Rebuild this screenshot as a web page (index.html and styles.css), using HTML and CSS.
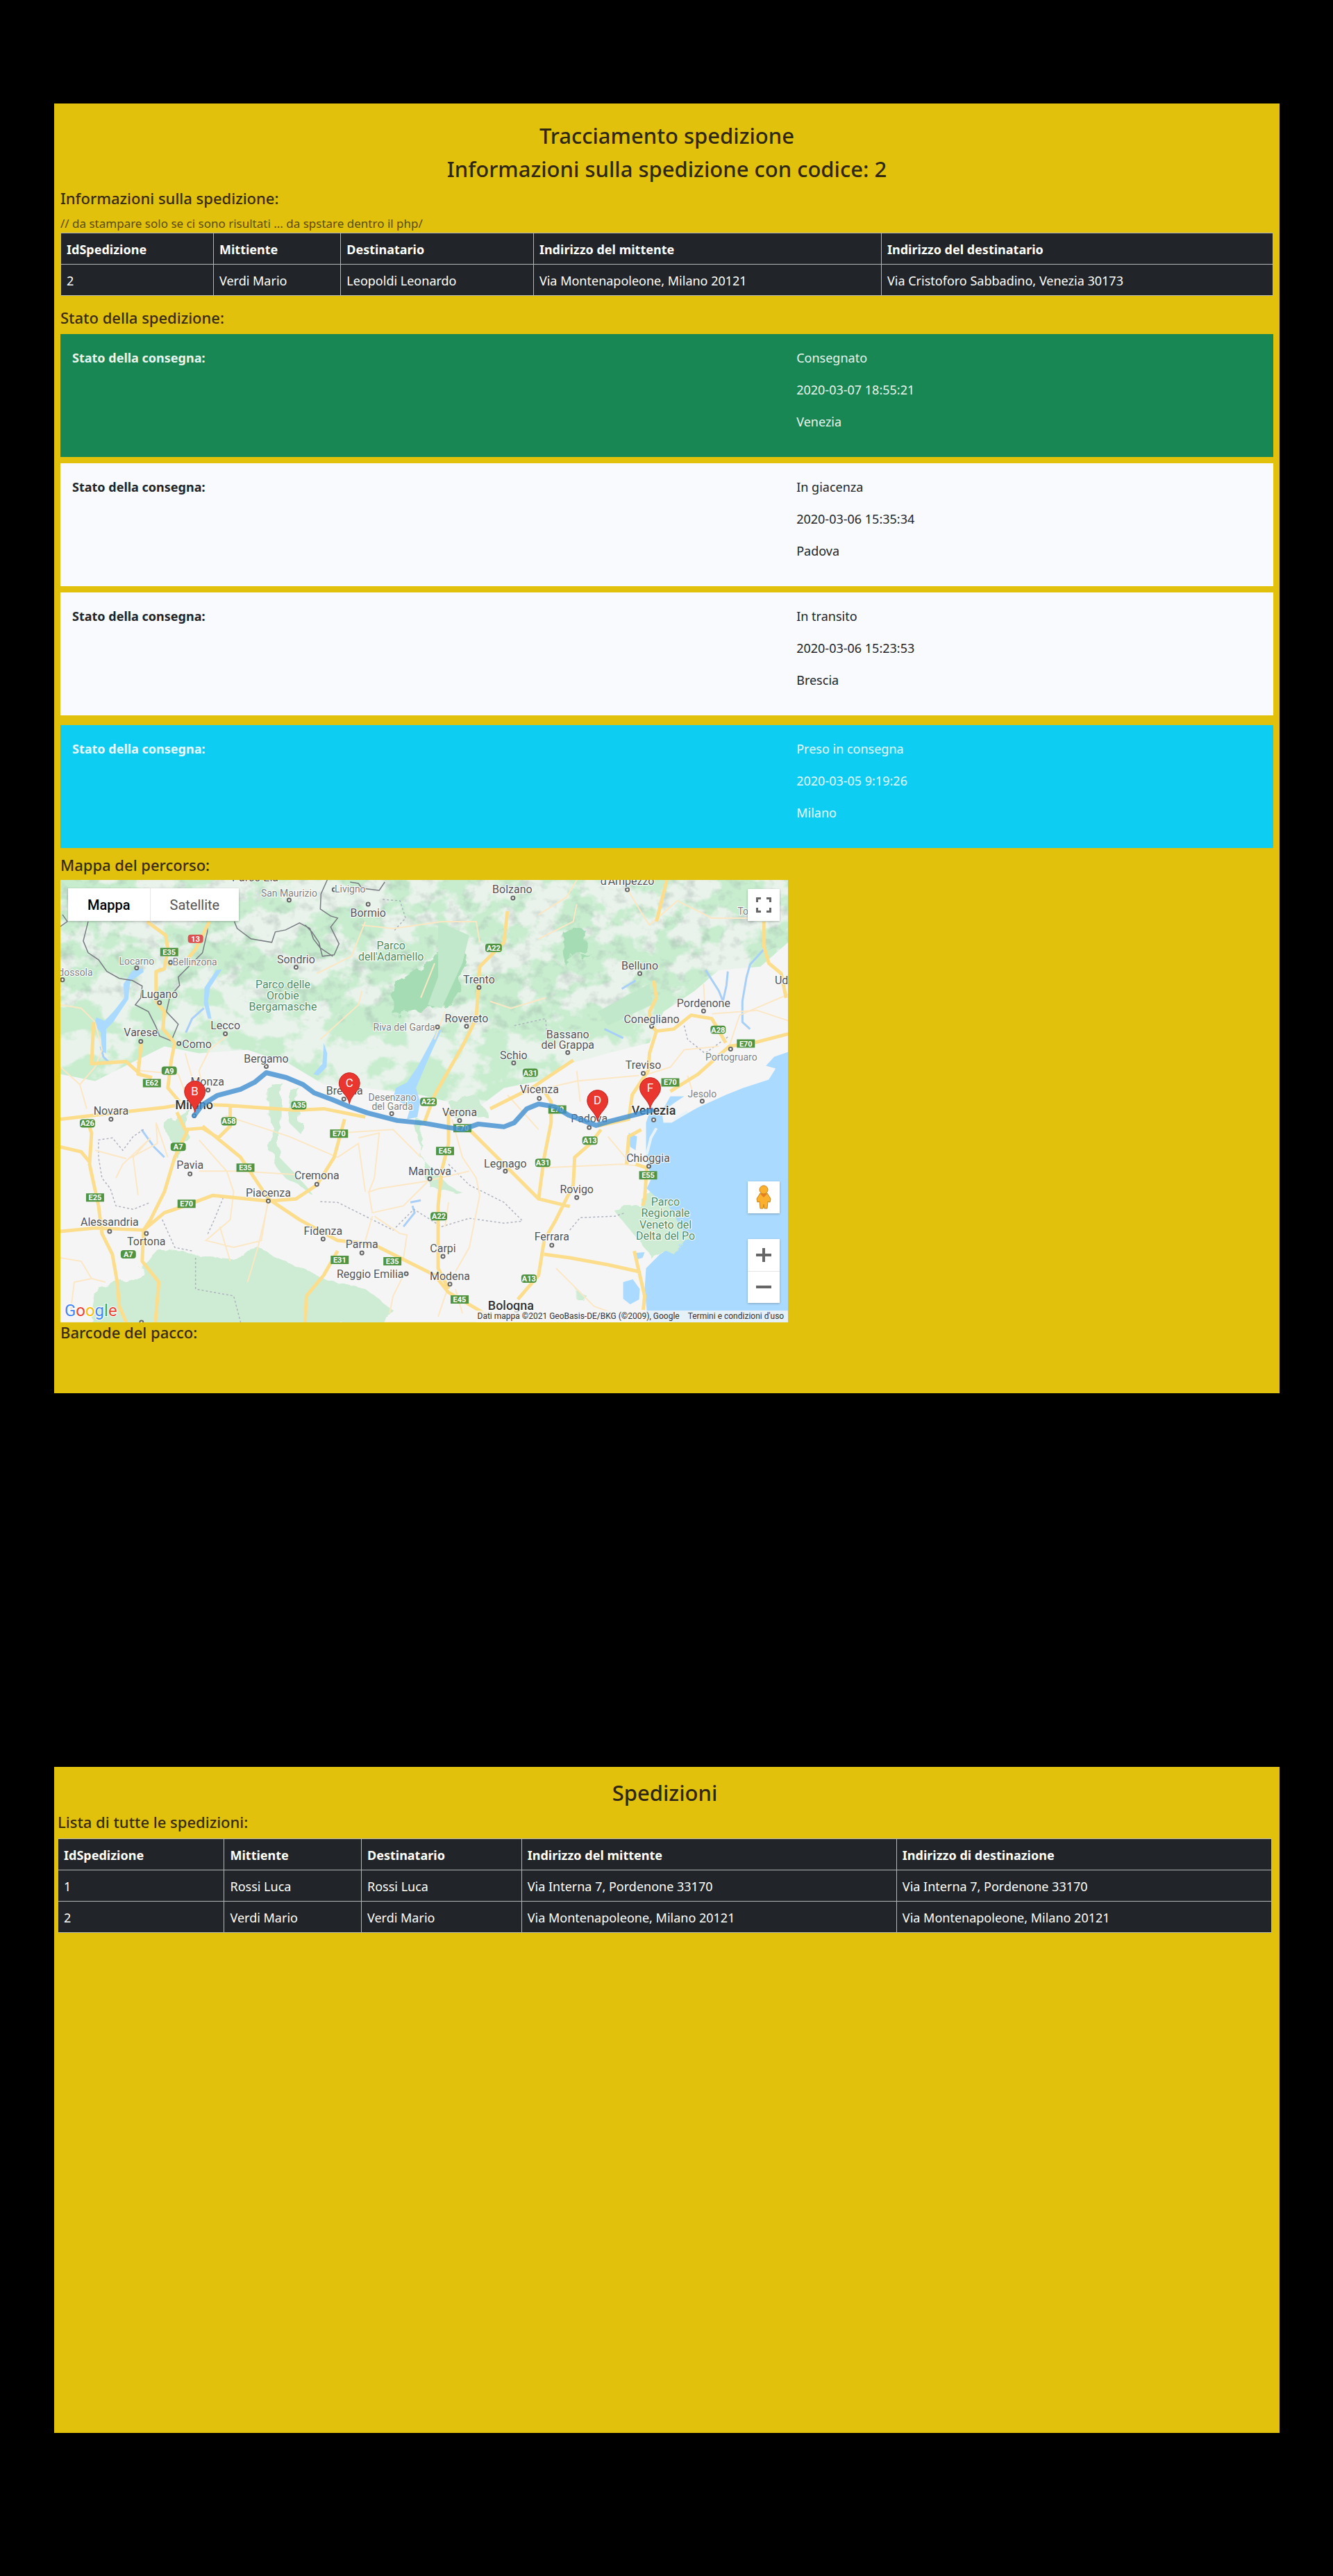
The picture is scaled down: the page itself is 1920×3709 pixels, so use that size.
FILE: index.html
```html
<!DOCTYPE html>
<html lang="it">
<head>
<meta charset="utf-8">
<meta name="viewport" content="width=device-width, initial-scale=1">
<title>Tracciamento spedizione</title>
<link rel="stylesheet" href="styles.css">
</head>
<body>
<main class="pages">
<section class="panel">
  <h1 class="title">Tracciamento spedizione</h1>
  <h2 class="title">Informazioni sulla spedizione con codice: 2</h2>
  <h3 class="subtitle">Informazioni sulla spedizione:</h3>
  <p class="note">// da stampare solo se ci sono risultati ... da spstare dentro il php/</p>
  <table class="data">
    <colgroup><col class="t-id"><col class="t-from"><col class="t-to"><col class="t-src"><col></colgroup>
    <thead><tr><th>IdSpedizione</th><th>Mittiente</th><th>Destinatario</th><th>Indirizzo del mittente</th><th>Indirizzo del destinatario</th></tr></thead>
    <tbody><tr><td>2</td><td>Verdi Mario</td><td>Leopoldi Leonardo</td><td>Via Montenapoleone, Milano 20121</td><td>Via Cristoforo Sabbadino, Venezia 30173</td></tr></tbody>
  </table>
  <h3 class="subtitle subtitle-spaced">Stato della spedizione:</h3>
  <div class="states">
    <article class="state state-done"><strong>Stato della consegna:</strong><div class="values"><span>Consegnato</span><span>2020-03-07 18:55:21</span><span>Venezia</span></div></article>
    <article class="state"><strong>Stato della consegna:</strong><div class="values"><span>In giacenza</span><span>2020-03-06 15:35:34</span><span>Padova</span></div></article>
    <article class="state"><strong>Stato della consegna:</strong><div class="values"><span>In transito</span><span>2020-03-06 15:23:53</span><span>Brescia</span></div></article>
    <article class="state state-start"><strong>Stato della consegna:</strong><div class="values"><span>Preso in consegna</span><span>2020-03-05 9:19:26</span><span>Milano</span></div></article>
  </div>
  <h3 class="subtitle subtitle-map">Mappa del percorso:</h3>
  <div class="map">
    <svg class="map-canvas" viewBox="0 0 1050 638" role="img" aria-label="Percorso Milano - Venezia">
      <defs>
        <filter id="relief" x="0" y="0" width="100%" height="100%" color-interpolation-filters="sRGB">
          <feTurbulence type="fractalNoise" baseFrequency=".018 .022" numOctaves="5" seed="8"/>
          <feColorMatrix values="0 0 0 0 .76  0 0 0 0 .92  0 0 0 0 .79  9 0 0 0 -3.9" result="n"/>
          <feComposite in="n" in2="SourceAlpha" operator="in"/>
        </filter>
        <filter id="ridge" x="0" y="0" width="100%" height="100%" color-interpolation-filters="sRGB">
          <feTurbulence type="fractalNoise" baseFrequency=".05 .06" numOctaves="4" seed="3"/>
          <feColorMatrix values="0 0 0 0 .55  0 0 0 0 .6  0 0 0 0 .6  3 0 0 0 -1.55" result="n"/>
          <feComposite in="n" in2="SourceAlpha" operator="in"/>
        </filter>
        <filter id="rough"><feTurbulence type="fractalNoise" baseFrequency=".04" numOctaves="3" seed="2"/><feDisplacementMap in="SourceGraphic" scale="22"/></filter>
        <g id="pin"><path d="M0 30C-2 17-15 12-15 0a15 15 0 0 1 30 0C15 12 2 17 0 30z" fill="#e9362f" stroke="#c5221f"/></g>
      </defs>
      <rect width="1050" height="638" fill="#f6f5f6"/>
      <!-- terrain -->
      <path d="M0 0H1050V90L1010 125 950 130 915 160 870 190 850 235 790 250 735 265 690 290 640 300 600 330 520 310 440 300 380 295 330 265 270 245 200 250 150 240 110 260 50 290 0 280z" fill="#d8f0dd" opacity=".4"/>
      <path d="M0 0H1050V90L1010 125 950 130 915 160 870 190 850 235 790 250 735 265 690 290 640 300 600 330 520 310 440 300 380 295 330 265 270 245 200 250 150 240 110 260 50 290 0 280z" filter="url(#relief)" opacity=".85"/>
      <path d="M0 0H1050V90L950 130 870 170 735 220 640 220 520 220 330 200 200 150 0 190z" filter="url(#ridge)" opacity=".3"/>
      <g fill="#ceecd3" filter="url(#rough)">
        <path d="M50 590 110 575 140 535 190 540 250 545 290 535 350 560 390 580 440 590 480 620 470 645H40z"/>
        <path d="M150 350 185 330 180 380 165 400zM300 290 318 290 316 400 345 430 360 450 325 430 305 405zM335 305 345 300 350 370 330 350zM510 340 525 350 520 400 560 440 585 455 530 440z"/>
        <path d="M800 478 840 465 860 440 905 500 885 530 860 540 835 520zM560 320 600 310 615 340 570 345zM745 590 760 600 750 610z"/>
      </g>
      <g fill="#a6dcb4" filter="url(#rough)"><path d="M485 150 560 100 585 85 590 130 560 175 535 185 480 195zM725 75 755 70 755 105 730 125zM755 110 765 105 755 120z"/></g>
      <path d="M545 60 590 80 580 120 550 185 530 180 545 140zM820 165 850 150 853 180 790 210 775 190z" fill="#c2e8cb"/>
      <!-- sea and lakes -->
      <g fill="#aadaff">
        <path d="M1050 248 1030 255 1018 268 1032 272 1022 288 985 300 960 310 920 328 895 342 882 350 870 350 868 335 885 322 900 312 880 312 870 330 860 335 850 335 845 350 845 392 852 432 846 445 860 458 875 465 895 500 885 528 865 540 845 560 843 590 846 620 849 638H1050z"/>
        <path d="M812 580 826 576 836 590 835 605 822 612 812 604zM830 538 843 537 840 545 833 547zM820 365 832 370 830 390 822 385z"/>
        <path d="M543 218 550 216 530 260 513 300 519 320 515 342 500 345 505 328 480 315 484 300 500 292 515 270z"/>
        <path d="M104 131 119 127 120 133 101 146 99 160 98 172 76 205 66 215 66 250 60 248 58 220 48 208 52 198 64 203 78 188 92 170 91 150zM225 130 233 129 216 155 213 175 218 200 213 200 207 178 208 155zM380 235 385 250 384 270 372 282 365 280 378 265z"/>
      </g>
      <path d="M845 490 858 462 880 480 905 515 885 540 868 532 852 545 838 520z" fill="#ceecd3" filter="url(#rough)"/>
      <path d="M846 396 852 372 860 358M885 346 905 334" fill="none" stroke="#e8f3f8" stroke-width="4"/>
      <path d="M181 220 190 200 207 185M58 240 62 255 70 263M931 130 950 160 956 175 961 152 963 132M1018 97 995 122 990 140 984 175 984 205 995 215M785 215 812 228M117 360 135 385 150 400M810 157 830 145M505 465 520 462M508 470 511 480 495 500" fill="none" stroke="#a8cff8" stroke-width="3"/>
      <!-- borders -->
      <g fill="none" stroke="#777a80" stroke-width="1.500"><path d="M40 60 33 88 40 105 55 115 67 132 85 142 104 145 118 153 116 170 108 180 127 190 138 212 143 225 160 232 170 208 153 190 158 168 172 152 170 140 190 120 205 105 212 75 213 60M251 60 255 70 275 85 305 90 310 75 325 72 345 62 360 70 365 85 375 98 393 110M385 0 376 20 375 42 390 52 400 55 390 68 402 92 395 108 378 110 373 90 363 75 353 65M418 3 430 5 435 12 460 15 468 3M0 67 10 60 3 50"/>
      <path stroke="#aeb2bd" stroke-dasharray="3 3" d="M120 360 105 370 90 390 75 372 55 375 55 400 60 430 72 445 80 470 105 475 130 465M235 458 222 490 212 512M147 490 165 530 190 535M195 545V590L250 600 260 638M375 464 400 465 440 485 480 505 510 475 550 500 590 488 640 495 667 492M560 410 590 440 640 465 667 492M735 505 750 487 800 485 815 480M655 210 700 200 702 225M900 210 905 230 930 250 965 225M465 28 490 30 498 55 480 75"/></g>
      <!-- roads -->
      <g fill="none" stroke="#fbe7c4" stroke-width="2"><path d="M0 180 30 185 50 205M50 205 60 245 50 270 28 295 0 270M28 295 38 330M110 262 115 275 170 280 185 320M215 245 200 275 205 300M240 225 215 245M180 250 190 285 210 290M238 340 330 370 400 400 430 380 440 450M80 430 90 410 130 372 105 400 112 455M98 402 140 380 138 350 155 400M50 390 95 402M200 420 260 420 340 425M200 375 240 420 250 450 245 490 210 520 250 530 290 520 299 465M300 465 285 530 270 580M0 545 30 550 45 575 65 580M45 575 20 580 15 620M402 365 480 360 520 400M430 372 460 365 453 430 445 450 460 445 525 435 590 420M445 450 450 480 495 470 530 435M450 485 440 520M453 485 490 510 500 512 495 545M565 345 580 400 600 430 605 455 590 530 570 565M560 465 555 500M495 570 480 600 475 625M645 310 690 360M700 415 810 410 830 412M790 370 815 400M745 275 750 320M693 302 745 290 835 282M841 282 880 270 900 245 950 240M905 282 915 315M930 185 928 150M965 240 980 195 1050 165M940 193 1005 188 1050 203M715 560 770 615 790 622M560 585 545 630M570 590 580 625M230 500 245 550M690 50 730 25 745 0M690 85 740 60 745 35M810 0 840 50 850 65 890 30 940 55 1000 55M620 175 650 185 700 170M435 65 480 70 550 60 600 60 605 90M370 135 420 110 440 60M375 230 430 180 435 160M540 120 520 170M555 190 540 230"/></g>
      <g fill="none" stroke="#fbdd8c" stroke-width="5" stroke-linejoin="round"><path d="M0 345 60 338 150 328 180 323 240 325 340 332 380 330 440 342M125 60 152 80 155 100 150 128 138 132 138 175 150 190 148 215 165 235 160 260 155 300 172 320M215 60 205 80 195 100 180 118 155 122M117 232 112 280 132 285M48 205 45 265 95 262 115 280M245 325 245 355 228 372 205 358 180 360 168 335M185 358 165 400 150 450 130 490 120 505 118 550 142 580 137 638M38 345 45 365 42 410 55 470 60 510 75 540 82 580 85 615 95 638M0 385 30 392 43 408M0 507 50 502 120 505 150 480 180 470 220 455 300 463 340 460 370 440 395 400 410 345M205 355 260 400 300 460 345 490 400 520 450 525 540 570 560 595 620 630M400 535 380 570 355 600 353 638M645 45 640 90 605 125 600 200 580 240 560 275 540 310 525 350M560 330 560 380 550 420 545 470 545 560 560 590M590 360 630 400 690 460 735 471M740 260 680 300 620 330M695 300 708 320 708 350 698 400 690 460M780 360 765 380 742 400 740 440 715 490 698 520 690 570 660 605M698 540 735 545 790 555 835 565M838 360 820 370 817 410M830 410 846 415 843 460 840 470M828 535 836 570 843 600 841 620M875 0 860 60M856 145 860 170 850 190 852 210 860 218 850 250 848 275 825 310 820 345 775 355M860 218 885 215 910 195 940 200 960 235M880 305 920 280 965 240 1000 235 1050 222M1015 60 1015 95 1022 120 1040 135 1047 170"/></g>
      <!-- motorway shields -->
      <g class="shields">
        <g fill="#4f9440"><path d="M144 98h26v12h-26zM119 287h26v12h-26zM254 409h26v12h-26zM37 452h26v12H37zM169 461h26v12h-26zM389 360h26v12h-26zM567 352h26v12h-26zM542 385h26v12h-26zM704 325h26v12h-26zM835 420h26v12h-26zM867 286h26v12h-26zM976 230h26v12h-26zM390 542h26v12h-26zM466 544h26v12h-26zM563 599h26v12h-26z"/>
        <rect x="146" y="269" width="22" height="12" rx="4"/><rect x="333" y="319" width="22" height="12" rx="4"/><rect x="28" y="345" width="22" height="12" rx="4"/><rect x="232" y="342" width="22" height="12" rx="4"/><rect x="159" y="379" width="22" height="12" rx="4"/><rect x="87" y="534" width="22" height="12" rx="4"/><rect x="613" y="92" width="24" height="12" rx="4"/><rect x="667" y="272" width="22" height="12" rx="4"/><rect x="519" y="314" width="24" height="12" rx="4"/><rect x="938" y="210" width="22" height="12" rx="4"/><rect x="753" y="370" width="22" height="12" rx="4"/><rect x="685" y="402" width="22" height="12" rx="4"/><rect x="534" y="479" width="24" height="12" rx="4"/><rect x="665" y="569" width="22" height="12" rx="4"/></g>
        <rect x="184" y="79" width="22" height="12" rx="4" fill="#dc5151"/>
        <text x="157" y="108">E35</text><text x="195" y="89">13</text><text x="132" y="297">E62</text><text x="157" y="279">A9</text><text x="344" y="329">A35</text><text x="39" y="355">A26</text><text x="243" y="352">A58</text><text x="170" y="389">A7</text><text x="267" y="419">E35</text><text x="50" y="462">E25</text><text x="182" y="471">E70</text><text x="98" y="544">A7</text><text x="625" y="102">A22</text><text x="678" y="282">A31</text><text x="531" y="324">A22</text><text x="949" y="220">A28</text><text x="989" y="240">E70</text><text x="880" y="296">E70</text><text x="717" y="335">E70</text><text x="764" y="380">A13</text><text x="848" y="430">E55</text><text x="696" y="412">A31</text><text x="402" y="370">E70</text><text x="580" y="362">E70</text><text x="555" y="395">E45</text><text x="546" y="489">A22</text><text x="403" y="552">E31</text><text x="479" y="554">E35</text><text x="676" y="579">A13</text><text x="576" y="609">E45</text>
      </g>
      <!-- town dots -->
      <path class="dots" d="M330 29h0M340 126h0M110 127h0M159 119h0M3 144h0M143 177h0M116 233h0M171 236h0M238 222h0M297 269h0M213 303h0M193 340h0M73 345h0M187 424h0M370 439h0M300 463h0M71 507h0M124 510h0M117 638h0M395 14h0M444 35h0M653 26h0M604 155h0M586 211h0M544 212h0M654 264h0M409 316h0M478 337h0M691 315h0M818 14h0M836 135h0M928 189h0M853 211h0M732 249h0M841 279h0M967 244h0M926 319h0M763 357h0M856 346h0M849 413h0M745 458h0M709 527h0M576 347h0M642 420h0M533 431h0M379 518h0M435 538h0M552 543h0M499 568h0M562 583h0"/>
      <path class="dots dots-in" d="M330 29h0M340 126h0M110 127h0M159 119h0M3 144h0M143 177h0M116 233h0M171 236h0M238 222h0M297 269h0M213 303h0M193 340h0M73 345h0M187 424h0M370 439h0M300 463h0M71 507h0M124 510h0M117 638h0M395 14h0M444 35h0M653 26h0M604 155h0M586 211h0M544 212h0M654 264h0M409 316h0M478 337h0M691 315h0M818 14h0M836 135h0M928 189h0M853 211h0M732 249h0M841 279h0M967 244h0M926 319h0M763 357h0M856 346h0M849 413h0M745 458h0M709 527h0M576 347h0M642 420h0M533 431h0M379 518h0M435 538h0M552 543h0M499 568h0M562 583h0"/>
      <g class="town town-minor">
        <text x="330" y="24">San Maurizio</text><text x="110" y="122">Locarno</text><text x="194" y="123">Bellinzona</text><text x="22" y="138">dossola</text><text x="418" y="18">Livigno</text><text x="496" y="217">Riva del Garda</text><text x="479" y="319">Desenzano</text><text x="479" y="332">del Garda</text><text x="968" y="260">Portogruaro</text><text x="926" y="314">Jesolo</text><text x="985" y="50">To</text>
      </g>
      <g class="town">
        <text x="281" y="2">Parco Ela</text><text x="340" y="120">Sondrio</text><text x="143" y="170">Lugano</text><text x="116" y="225">Varese</text><text x="197" y="242">Como</text><text x="238" y="215">Lecco</text><text x="297" y="263">Bergamo</text><text x="212" y="297">Monza</text><text x="73" y="339">Novara</text><text x="187" y="417">Pavia</text><text x="370" y="432">Cremona</text><text x="300" y="457">Piacenza</text><text x="71" y="499">Alessandria</text><text x="124" y="527">Tortona</text><text x="444" y="53">Bormio</text><text x="652" y="19">Bolzano</text><text x="604" y="149">Trento</text><text x="586" y="205">Rovereto</text><text x="654" y="258">Schio</text><text x="410" y="310">Brescia</text><text x="691" y="308">Vicenza</text><text x="818" y="7">d'Ampezzo</text><text x="836" y="129">Belluno</text><text x="928" y="183">Pordenone</text><text x="853" y="206">Conegliano</text><text x="732" y="228">Bassano</text><text x="732" y="243">del Grappa</text><text x="841" y="272">Treviso</text><text x="1051" y="150">Udine</text><text x="763" y="350">Padova</text><text x="848" y="407">Chioggia</text><text x="745" y="452">Rovigo</text><text x="709" y="520">Ferrara</text><text x="576" y="341">Verona</text><text x="642" y="415">Legnago</text><text x="533" y="426">Mantova</text><text x="379" y="512">Fidenza</text><text x="435" y="531">Parma</text><text x="552" y="537">Carpi</text><text x="447" y="574">Reggio Emilia</text><text x="562" y="577">Modena</text>
      </g>
      <g class="town town-park">
        <text x="321" y="156">Parco delle</text><text x="321" y="172">Orobie</text><text x="321" y="188">Bergamasche</text><text x="477" y="100">Parco</text><text x="477" y="116">dell'Adamello</text><text x="873" y="470">Parco</text><text x="873" y="486">Regionale</text><text x="873" y="503">Veneto del</text><text x="873" y="519">Delta del Po</text>
      </g>
      <g class="town town-major"><text x="193" y="331">Milano</text><text x="856" y="339">Venezia</text><text x="650" y="620">Bologna</text></g>
      <path d="M193 340 205 324 226 311 260 302 280 292 297 278 326 285 350 295 366 307 393 317 417 327 443 336 486 347 526 351 560 357 580 360 603 352 640 356 655 350 673 330 690 323 713 327 733 339 773 354 793 348 836 337 853 332" fill="none" stroke="#3f8fd0" stroke-opacity=".8" stroke-width="7" stroke-linejoin="round" stroke-linecap="round"/>
      <use href="#pin" x="194" y="305"/><use href="#pin" x="417" y="293"/><use href="#pin" x="775" y="318"/><use href="#pin" x="851" y="300"/>
      <g class="pin-letters"><text x="194" y="311">B</text><text x="417" y="299">C</text><text x="775" y="324">D</text><text x="851" y="306">F</text></g>
      <text class="logo" x="6" y="629"><tspan fill="#4285f4">G</tspan><tspan fill="#ea4335">o</tspan><tspan fill="#fbbc05">o</tspan><tspan fill="#4285f4">g</tspan><tspan fill="#34a853">l</tspan><tspan fill="#ea4335">e</tspan></text>
    </svg>
    <div class="map-types"><button type="button" class="active">Mappa</button><button type="button">Satellite</button></div>
    <button type="button" class="control control-full" aria-label="Schermo intero"><svg viewBox="0 0 22 22" width="22" height="22"><path d="M1.500 7V1.500H7M15 1.500h5.500V7M20.500 15v5.500H15M7 20.500H1.500V15" fill="none" stroke="#666" stroke-width="3"/></svg></button>
    <div class="map-tools">
      <button type="button" class="control" aria-label="Street View"><svg viewBox="0 0 22 36" width="22" height="36"><g fill="#fbb12d" stroke="#c8851c"><path d="M6 12 1 20l1 5 3-1 1 10h4l1-6 1 6h4l1-10 3 1 1-5-5-8z"/><circle cx="11" cy="7" r="6"/></g><path d="m6 13 5 5 5-5z" fill="#e58022"/></svg></button>
      <div class="zoom"><button type="button" class="control" aria-label="Zoom avanti"><svg viewBox="0 0 22 22" width="22" height="22"><path d="M0 11h22M11 1v20" stroke="#666" stroke-width="4"/></svg></button><button type="button" class="control" aria-label="Zoom indietro"><svg viewBox="0 0 22 22" width="22" height="22"><path d="M0 11h22" stroke="#666" stroke-width="4"/></svg></button></div>
    </div>
    <div class="credits"><span>Dati mappa ©2021 GeoBasis-DE/BKG (©2009), Google</span><a href="#">Termini e condizioni d'uso</a></div>
  </div>
  <h3 class="subtitle">Barcode del pacco:</h3>
</section>

<section class="panel panel-list">
  <h1 class="title">Spedizioni</h1>
  <h3 class="subtitle">Lista di tutte le spedizioni:</h3>
  <table class="data">
    <colgroup><col class="l-id"><col class="l-from"><col class="l-to"><col class="l-src"><col></colgroup>
    <thead><tr><th>IdSpedizione</th><th>Mittiente</th><th>Destinatario</th><th>Indirizzo del mittente</th><th>Indirizzo di destinazione</th></tr></thead>
    <tbody>
      <tr><td>1</td><td>Rossi Luca</td><td>Rossi Luca</td><td>Via Interna 7, Pordenone 33170</td><td>Via Interna 7, Pordenone 33170</td></tr>
      <tr><td>2</td><td>Verdi Mario</td><td>Verdi Mario</td><td>Via Montenapoleone, Milano 20121</td><td>Via Montenapoleone, Milano 20121</td></tr>
    </tbody>
  </table>
</section>
</main>
</body>
</html>
```
FILE: styles.css
```css
* { box-sizing: border-box; }
body { margin: 0; background: #000; color: #212529; font: 18px/28px "Noto Sans", "Open Sans", sans-serif; }
h1, h2, h3, p { margin: 0; }
.pages { display: flex; flex-direction: column; gap: 538px; padding: 149px 77px 201px 78px; }
.panel { background: #e1c10b; padding: 22px 9px 64px 9px; }
.panel-list { min-height: 959px; padding: 13px 11px 0 5px; }
.title { font-size: 31px; line-height: 48px; font-weight: 500; text-align: center; color: #2f2613; }
.subtitle { font-size: 22px; line-height: 32px; font-weight: 500; color: #372a10; margin: 2px 0 8px; }
.subtitle-spaced { margin-top: 15px; }
.subtitle-map { margin: 8px 0 6px; }
.note { font-size: 17px; line-height: 26px; color: #5b4a10; }

.data { width: 100%; table-layout: fixed; border-collapse: collapse; background: #212529; color: #fff; }
.data th, .data td { border: 1px solid #b4b6b8; padding: 10px 8px 8px; text-align: left; line-height: 26px; }
.data th { font-weight: 700; }
.t-id { width: 12.6%; } .t-from { width: 10.5%; } .t-to { width: 15.9%; } .t-src { width: 28.7%; }
.l-id { width: 13.7%; } .l-from { width: 11.3%; } .l-to { width: 13.2%; } .l-src { width: 30.9%; }

.states { display: flex; flex-direction: column; gap: 9px; }
.state { display: grid; grid-template-columns: 60% 40%; padding: 20px 0 37px; background: #f8fafd; }
.state strong { padding-left: 17px; }
.state-done { background: #198754; color: #e9f5ee; }
.state-start { background: #0dcdf2; color: #e9fbff; margin-top: 5px; }
.values { display: flex; flex-direction: column; gap: 18px; padding-left: 12px; }

.map { position: relative; width: 60%; font-family: Roboto, sans-serif; overflow: hidden; margin-bottom: -4px; }
.map-canvas { display: block; width: 100%; height: auto; }
.shields text { font-size: 11px; font-weight: 700; fill: #fff; text-anchor: middle; }
.dots { stroke: #666; stroke-width: 7; stroke-linecap: round; }
.dots-in { stroke: #fff; stroke-width: 3; }
.town text { font-size: 16px; fill: #505358; text-anchor: middle; stroke: #fff; stroke-width: 2px; paint-order: stroke; }
.town-minor text { font-size: 14px; fill: #7c7f84; }
.town-park text { fill: #4c8c64; }
.town-major text { font-size: 18px; font-weight: 500; fill: #303236; }
.pin-letters text { font-size: 17px; fill: #fff; text-anchor: middle; }
.logo { font-size: 24px; stroke: #fff; stroke-width: 2px; paint-order: stroke; }
.map button { border: 0; background: #fff; font: inherit; padding: 0; cursor: pointer; }
.map .map-types { position: absolute; left: 11px; top: 12px; display: flex; box-shadow: 0 1px 3px #0004; }
.map .map-types button { height: 47px; padding: 0 28px; font-size: 20px; color: #565656; }
.map .map-types .active { font-weight: 500; color: #000; border-right: 1px solid #e6e6e6; }
.control { display: flex; align-items: center; justify-content: center; width: 46px; height: 46px; }
.control-full { position: absolute; right: 12px; top: 13px; box-shadow: 0 1px 3px #0004; }
.map-tools { position: absolute; right: 12px; bottom: 28px; display: flex; flex-direction: column; gap: 37px; }
.map-tools > * { box-shadow: 0 1px 3px #0004; }
.zoom { background: #fff; }
.zoom .control + .control { border-top: 1px solid #e6e6e6; }
.credits { position: absolute; right: 0; bottom: 0; display: flex; gap: 12px; padding: 0 6px 0 2px; background: #f5f5f5cc; font-size: 12px; line-height: 17px; color: #333; }
.credits a { color: #333; text-decoration: none; }
```
